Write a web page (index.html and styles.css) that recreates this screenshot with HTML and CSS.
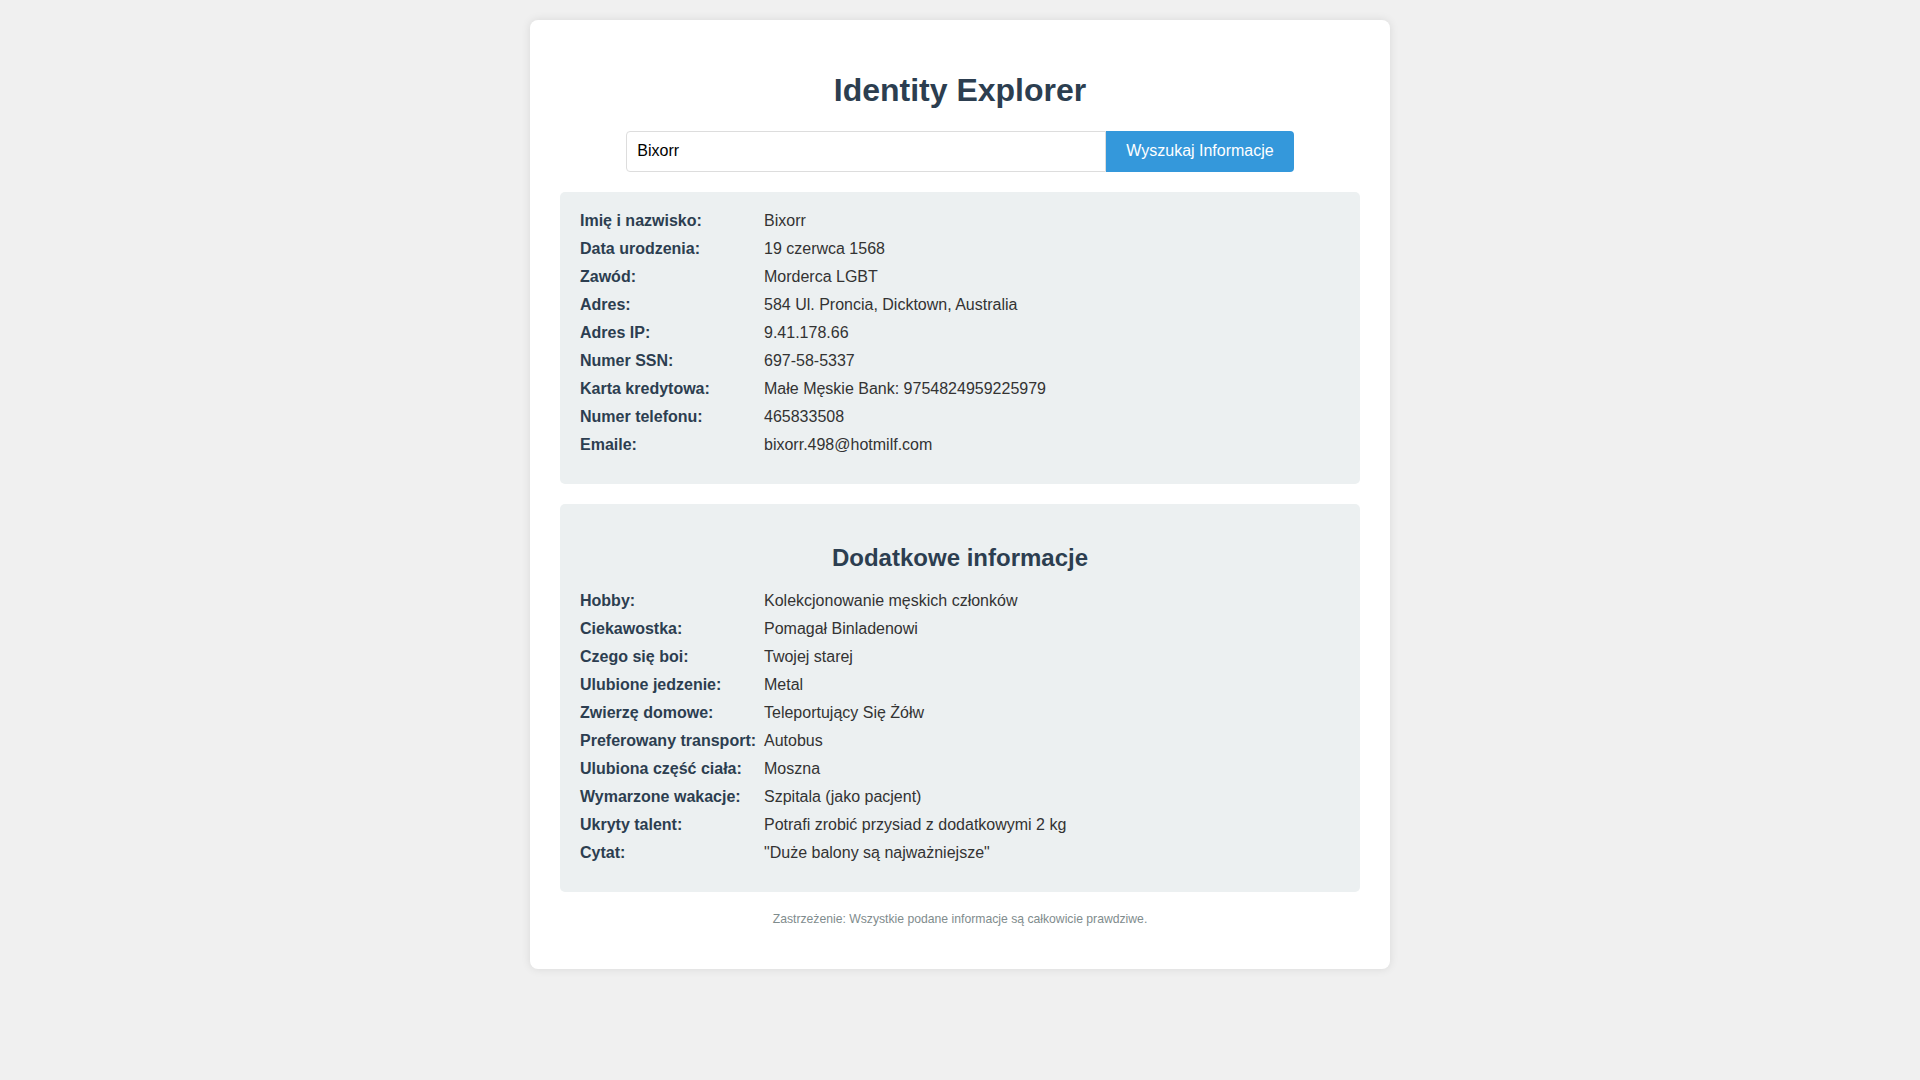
FILE: index.html
```html
<!DOCTYPE html>
<html lang="pl">
<head>
<meta charset="UTF-8">
<title>Identity Explorer</title>
<link rel="stylesheet" href="styles.css">
</head>
<body>
<main class="card">
  <h1 class="title">Identity Explorer</h1>
  <form class="search">
    <input class="search-input" type="text" value="Bixorr">
    <button class="search-btn" type="button">Wyszukaj Informacje</button>
  </form>

  <section class="panel">
    <div class="row"><span class="label">Imię i nazwisko:</span><span class="value">Bixorr</span></div>
    <div class="row"><span class="label">Data urodzenia:</span><span class="value">19 czerwca 1568</span></div>
    <div class="row"><span class="label">Zawód:</span><span class="value">Morderca LGBT</span></div>
    <div class="row"><span class="label">Adres:</span><span class="value">584 Ul. Proncia, Dicktown, Australia</span></div>
    <div class="row"><span class="label">Adres IP:</span><span class="value">9.41.178.66</span></div>
    <div class="row"><span class="label">Numer SSN:</span><span class="value">697-58-5337</span></div>
    <div class="row"><span class="label">Karta kredytowa:</span><span class="value">Małe Męskie Bank: 9754824959225979</span></div>
    <div class="row"><span class="label">Numer telefonu:</span><span class="value">465833508</span></div>
    <div class="row"><span class="label">Emaile:</span><span class="value">bixorr.498@hotmilf.com</span></div>
  </section>

  <section class="panel">
    <h2 class="panel-title">Dodatkowe informacje</h2>
    <div class="row"><span class="label">Hobby:</span><span class="value">Kolekcjonowanie męskich członków</span></div>
    <div class="row"><span class="label">Ciekawostka:</span><span class="value">Pomagał Binladenowi</span></div>
    <div class="row"><span class="label">Czego się boi:</span><span class="value">Twojej starej</span></div>
    <div class="row"><span class="label">Ulubione jedzenie:</span><span class="value">Metal</span></div>
    <div class="row"><span class="label">Zwierzę domowe:</span><span class="value">Teleportujący Się Żółw</span></div>
    <div class="row"><span class="label">Preferowany transport:</span><span class="value">Autobus</span></div>
    <div class="row"><span class="label">Ulubiona część ciała:</span><span class="value">Moszna</span></div>
    <div class="row"><span class="label">Wymarzone wakacje:</span><span class="value">Szpitala (jako pacjent)</span></div>
    <div class="row"><span class="label">Ukryty talent:</span><span class="value">Potrafi zrobić przysiad z dodatkowymi 2 kg</span></div>
    <div class="row"><span class="label">Cytat:</span><span class="value">"Duże balony są najważniejsze"</span></div>
  </section>

  <p class="disclaimer">Zastrzeżenie: Wszystkie podane informacje są całkowicie prawdziwe.</p>
</main>
</body>
</html>
```

FILE: styles.css
```css
* { box-sizing: border-box; }

body {
  margin: 0;
  padding: 20px 0;
  background: #f0f0f0;
  font-family: "Liberation Sans", Arial, sans-serif;
  color: #333;
}

.card {
  width: 860px;
  margin: 0 auto;
  padding: 30px;
  background: #fff;
  border-radius: 8px;
  box-shadow: 0 0 10px rgba(0, 0, 0, 0.1);
}

.title {
  margin: 21.5px 0 22px;
  font-size: 32px;
  font-weight: bold;
  line-height: normal;
  text-align: center;
  color: #2c3e50;
}

.search {
  display: flex;
  justify-content: center;
  margin: 0 0 20px;
}

.search-input {
  width: 480px;
  height: 41px;
  padding: 10px;
  font-family: "Liberation Sans", Arial, sans-serif;
  font-size: 16px;
  color: #000;
  border: 1px solid #ddd;
  border-radius: 4px 0 0 4px;
  outline: none;
}

.search-btn {
  padding: 10px 20px;
  font-family: "Liberation Sans", Arial, sans-serif;
  font-size: 16px;
  color: #fff;
  background: #3498db;
  border: none;
  border-radius: 0 4px 4px 0;
  cursor: pointer;
}

.panel {
  background: #ecf0f1;
  border-radius: 5px;
  padding: 20px;
  margin-bottom: 20px;
}

.panel-title {
  margin: 20px 0;
  font-size: 24px;
  font-weight: bold;
  line-height: normal;
  text-align: center;
  color: #2c3e50;
}

.row {
  display: flex;
  font-size: 16px;
  line-height: 18px;
  margin-bottom: 10px;
}

.label {
  flex: 0 0 auto;
  min-width: 184px;
  padding-right: 8px;
  font-weight: bold;
  color: #2c3e50;
}

.value {
  color: #333;
}

.disclaimer {
  margin: 20px 0 13px;
  font-size: 12.2px;
  text-align: center;
  color: #7f8c8d;
}
```
